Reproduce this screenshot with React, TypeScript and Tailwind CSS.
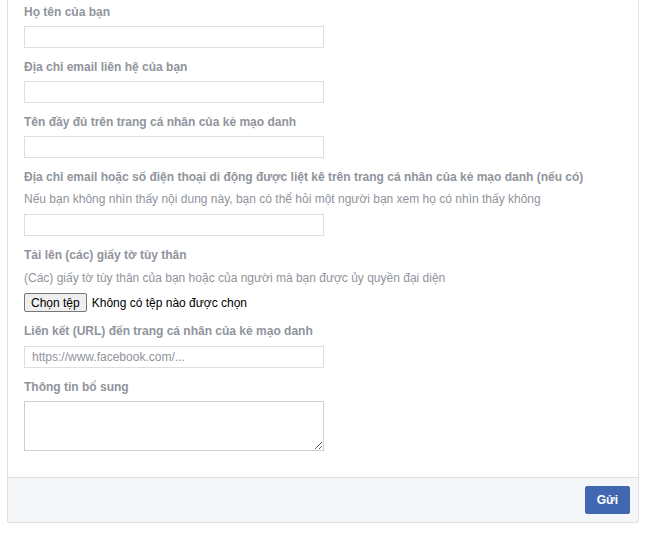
import React from "react"

const labelCls = "block text-[12px] leading-4 font-bold text-[#90949c] mb-[6px]"
const descCls = "text-[12px] leading-4 text-[#90949c] mb-[7px]"
const inputCls =
  "block w-[300px] h-[22px] border border-[#dddfe2] bg-white px-[7px] text-[12px] text-[#1d2129] outline-none placeholder:text-[#90949c]"

function Field({ label, desc, children, last }: { label: string; desc?: string; children: React.ReactNode; last?: boolean }) {
  return (
    <div className={last ? "" : "mb-[11px]"}>
      <label className={labelCls}>{label}</label>
      {desc && <div className={descCls}>{desc}</div>}
      {children}
    </div>
  )
}

export default function App() {
  return (
    <div className="min-h-[534px] bg-white px-[7px] pb-[10px]" style={{ fontFamily: '"Liberation Sans", Arial, sans-serif' }}>
      <div className="border-x border-b border-[#dddfe2] rounded-b-[3px] bg-white">
        <div className="px-4 pt-1 pb-[26px]">
          <Field label="Họ tên của bạn">
            <input className={inputCls} />
          </Field>
          <Field label="Địa chỉ email liên hệ của bạn">
            <input className={inputCls} />
          </Field>
          <Field label="Tên đầy đủ trên trang cá nhân của kẻ mạo danh">
            <input className={inputCls} />
          </Field>
          <Field
            label="Địa chỉ email hoặc số điện thoại di động được liệt kê trên trang cá nhân của kẻ mạo danh (nếu có)"
            desc="Nếu bạn không nhìn thấy nội dung này, bạn có thể hỏi một người bạn xem họ có nhìn thấy không"
          >
            <input className={inputCls} />
          </Field>
          <div className="mb-[11px] mt-[2px]">
            <label className={labelCls + " !mb-[7px]"}>Tải lên (các) giấy tờ tùy thân</label>
            <div className={descCls}>(Các) giấy tờ tùy thân của bạn hoặc của người mà bạn được ủy quyền đại diện</div>
            <div className="flex items-center h-[19px]">
              <button className="h-[19px] px-[6px] text-[12px] leading-none text-black bg-[#efefef] border border-[#767676] rounded-[2px]">
                Chọn tệp
              </button>
              <span className="ml-[5px] text-[12px] text-black">Không có tệp nào được chọn</span>
            </div>
          </div>
          <div className="mb-[11px]">
            <label className={labelCls + " !mb-[7px]"}>Liên kết (URL) đến trang cá nhân của kẻ mạo danh</label>
            <input className={inputCls} placeholder="https://www.facebook.com/..." />
          </div>
          <Field label="Thông tin bổ sung" last>
            <textarea className="block w-[300px] h-[50px] border border-[#ccd0d5] bg-white p-[4px] text-[12px] outline-none" />
          </Field>
        </div>
        <div className="flex justify-end border-t border-[#dddfe2] bg-[#f5f6f7] py-2 pr-2 rounded-b-[3px]">
          <button className="h-[28px] px-[11px] bg-[#4267b2] border border-[#4267b2] rounded-[2px] text-white text-[12px] font-bold">
            Gửi
          </button>
        </div>
      </div>
    </div>
  )
}
